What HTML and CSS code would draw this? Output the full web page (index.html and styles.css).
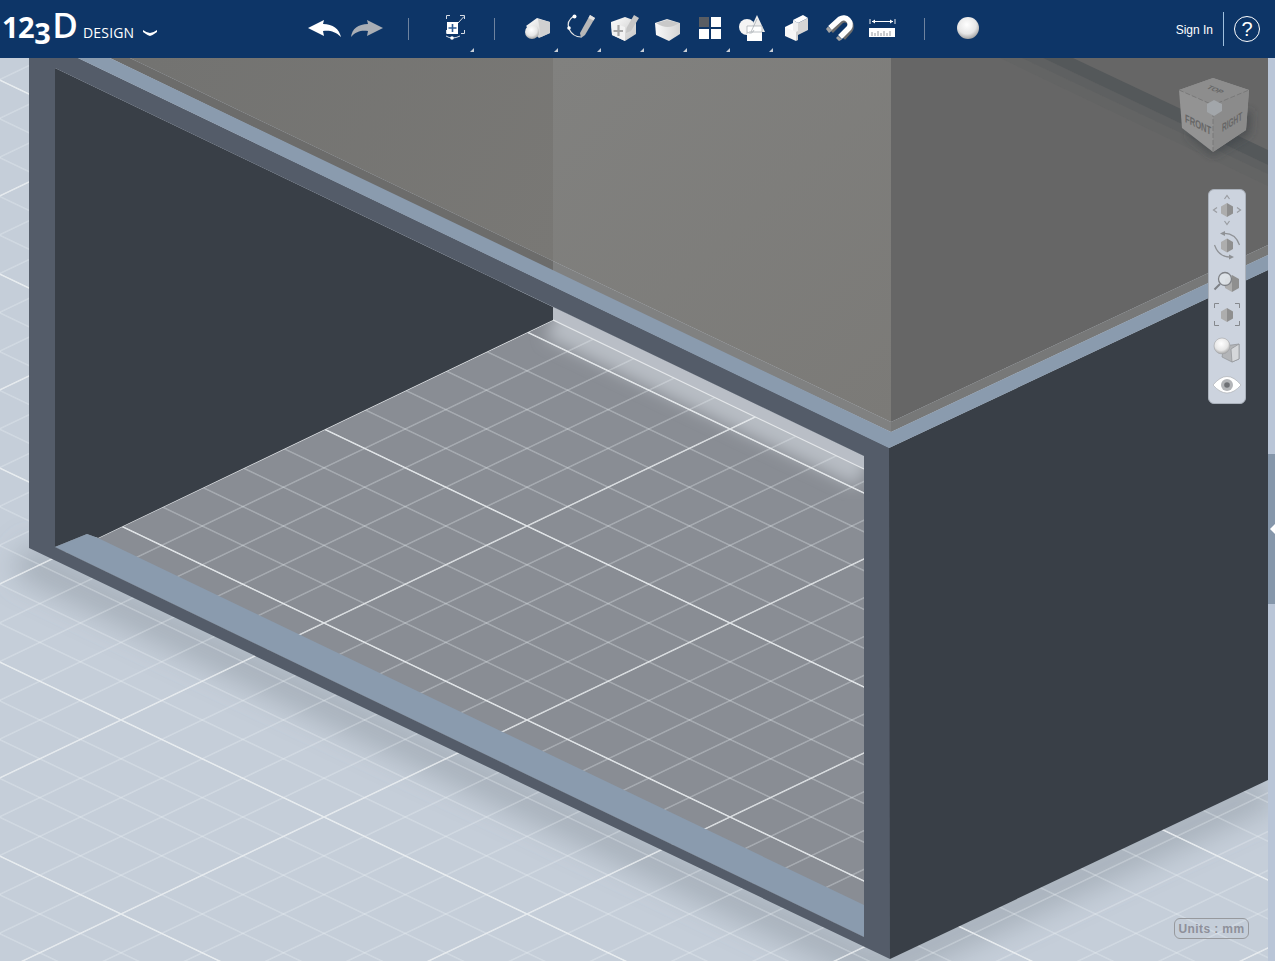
FILE: index.html
```html
<!DOCTYPE html>
<html lang="en">
<head>
  <meta charset="UTF-8" />
  <title>123D Design</title>
  <link rel="stylesheet" href="styles.css">
</head>
<body>
  <svg class="defs" width="0" height="0">
    <defs>
      <linearGradient id="metal" x1="0" y1="0" x2="1" y2="1">
        <stop offset="0" stop-color="#ffffff"/>
        <stop offset="1" stop-color="#c4c4c4"/>
      </linearGradient>
      <linearGradient id="side" x1="0" y1="0" x2="1" y2="0">
        <stop offset="0" stop-color="#fafafa"/>
        <stop offset="1" stop-color="#d4d4d4"/>
      </linearGradient>
      <radialGradient id="ball" cx="0.45" cy="0.35" r="0.7">
        <stop offset="0" stop-color="#ffffff"/>
        <stop offset="0.6" stop-color="#e6e6e6"/>
        <stop offset="1" stop-color="#969696"/>
      </radialGradient>
    </defs>
  </svg>

  <header class="topbar">
    <div class="logo">
      <span class="logo-num">12<span class="logo-three">3</span></span><span class="logo-d">D</span>
      <span class="logo-word">DESIGN</span>
      <svg class="logo-chevron" width="16" height="8" viewBox="0 0 16 8"><path d="M1 1 Q5 4 8 4 Q11 4 15 1 L15 3 Q11 6 8 7 Q5 6 1 3 Z" fill="#fff"/></svg>
    </div>

    <div class="tool">
      <svg class="icon" viewBox="303 8 40 40"><path d="M307 28 L323 20 L322 24 C332 24 338 29 340 37 C334 31 328 30 322 31 L323 36 Z" fill="#fff"/></svg>
    </div>
    <div class="tool">
      <svg class="icon" viewBox="346 8 40 40"><path d="M382 28 L366 20 L367 24 C357 24 351 29 350 37 C355 31 361 30 367 31 L366 36 Z" fill="#a9aeb5"/></svg>
    </div>
    <div class="sep sep-a"></div>

    <div class="tool has-menu">
      <svg class="icon" viewBox="433 8 40 40">
        <path d="M449 15.500 H445.500 V19 M459 15.500 H463.500 V19 M445.500 30 V33.500 H446 M463.500 30 V33.500 H460" fill="none" stroke="#d5dbe4" stroke-width="1"/>
        <path d="M457 23 L463 16.500" stroke="#d5dbe4" stroke-width="1"/>
        <rect x="446" y="22" width="11" height="12" fill="#fff"/>
        <path d="M451.500 24 V32 M447.500 28 H455.500" stroke="#2c5a92" stroke-width="1.600"/>
        <path d="M445 36 Q451 40 459 36" fill="none" stroke="#d5dbe4" stroke-width="1"/>
        <circle cx="451" cy="38" r="1.800" fill="#fff"/>
      </svg>
    </div>
    <div class="sep sep-b"></div>

    <div class="tool has-menu">
      <svg class="icon" viewBox="518 8 40 40">
        <path d="M526 26 L537 18 L550 22 V33 L539 38 Z" fill="url(#metal)"/>
        <path d="M538 19 L550 22 V33 L541 37 Z" fill="#d0d0d0"/>
        <circle cx="532" cy="32" r="7" fill="url(#ball)"/>
      </svg>
    </div>
    <div class="tool has-menu">
      <svg class="icon" viewBox="561 8 40 40">
        <path d="M574 16 Q566 21 569 29 Q573 37 581 37" fill="none" stroke="#e6e6e6" stroke-width="1.200"/>
        <circle cx="574.500" cy="16.500" r="2" fill="#fff"/>
        <circle cx="569" cy="28" r="1.800" fill="#fff"/>
        <path d="M590 15 L595 18 L585 35 L581 38 L580 33 Z" fill="#b8b8b8"/>
        <path d="M590 15 L595 18 L593.500 20.500 L588.500 18 Z" fill="#e2e2e2"/>
      </svg>
    </div>
    <div class="tool has-menu">
      <svg class="icon" viewBox="604 8 40 40">
        <path d="M611 22 L625 17 L636 21 V34 L625 41 L612 35 Z" fill="url(#metal)"/>
        <path d="M611 22 L625 27 V41 L612 35 Z" fill="#f2f2f2"/>
        <path d="M618.500 25 V36 M613.500 31 H623" stroke="#a6a6a6" stroke-width="2.200"/>
        <path d="M634 15 L639 18 L631 31 L626 33 L626.500 28 Z" fill="#c6c6c6"/>
      </svg>
    </div>
    <div class="tool has-menu">
      <svg class="icon" viewBox="647 8 40 40">
        <path d="M655 23 L667 19 L680 23 V34 L669 41 L656 35 Z" fill="url(#side)"/>
        <path d="M656 23 L667 20 L679 23 Q668 31 656 23 Z" fill="#c9c9c9"/>
      </svg>
    </div>
    <div class="tool has-menu">
      <svg class="icon" viewBox="690 8 40 40">
        <rect x="699" y="17" width="10" height="10" fill="#595d63"/>
        <rect x="711" y="17" width="10" height="10" fill="#fff"/>
        <rect x="699" y="29" width="10" height="10" fill="#fff"/>
        <rect x="711" y="29" width="10" height="10" fill="#fff"/>
      </svg>
    </div>
    <div class="tool has-menu">
      <svg class="icon" viewBox="733 8 40 40">
        <circle cx="747" cy="27" r="8" fill="#f4f4f4"/>
        <path d="M757 15 L765 32 H749 Z" fill="#ededed"/>
        <rect x="747" y="26" width="15" height="15" fill="#fff"/>
        <path d="M747 26 H762 V32 M747 26 V34 M751 32 L757 19 M747 32 Q752 35 754 30 M749 32 H762" fill="none" stroke="#a2a7ae" stroke-width="0.700"/>
      </svg>
    </div>
    <div class="tool">
      <svg class="icon" viewBox="776 8 40 40">
        <path d="M793 20 L803 15 L808 18 L798 23 Z" fill="#fff"/>
        <path d="M793 20 L798 23 V35 L793 32 Z" fill="#f0f0f0"/>
        <path d="M798 23 L808 18 V30 L798 35 Z" fill="#d6d6d6"/>
        <path d="M785 27 L793 23 V32 L797 34 L785 30 Z" fill="#fff"/>
        <path d="M785 27 L796 32 V41 L785 36 Z" fill="#f7f7f7"/>
        <path d="M796 32 L798 31 V40 L796 41 Z" fill="#cfcfcf"/>
      </svg>
    </div>
    <div class="tool">
      <svg class="icon" viewBox="819 8 40 40">
        <path d="M830 30 L840 20 A6.500 6.500 0 0 1 849 29 L842 37" fill="none" stroke="#6d6d6d" stroke-width="5.500" transform="translate(1 1)"/>
        <path d="M830 28 L840 19 A6.500 6.500 0 0 1 849 28 L840 37" fill="none" stroke="#fff" stroke-width="5.500"/>
        <path d="M828 26.500 L832 30.500 L829 33 L826 29 Z M838 36 L842 39.500 L839 41 L836 38 Z" fill="#a3a3a3"/>
      </svg>
    </div>
    <div class="tool">
      <svg class="icon" viewBox="862 8 40 40">
        <path d="M870 19 V24 M895 19 V24" stroke="#e4e8ee" stroke-width="1"/>
        <path d="M872 21.500 H893" stroke="#fff" stroke-width="1"/>
        <path d="M872 21.500 L875 19.500 V23.500 Z M893 21.500 L890 19.500 V23.500 Z" fill="#fff"/>
        <rect x="869" y="28" width="26" height="9" fill="#fff"/>
        <path d="M872 36 V32 M875 36 V33 M878 36 V31 M881 36 V33 M884 36 V31 M887 36 V33 M890 36 V31" stroke="#7a7f86" stroke-width="0.800"/>
      </svg>
    </div>
    <div class="sep sep-c"></div>

    <div class="tool">
      <svg class="icon" viewBox="949 8 40 40"><circle cx="968" cy="28" r="11" fill="url(#ball)"/></svg>
    </div>

    <a class="signin">Sign In</a>
    <div class="sep-light"></div>
    <div class="help">?</div>
  </header>

  <main class="workspace">
    <div class="viewport">
      <svg class="scene" width="1268" height="903" viewBox="0 58 1268 903">
        <defs>
          <pattern id="grid" patternUnits="userSpaceOnUse" width="100" height="100" patternTransform="matrix(2.03 0.97 2.03 -0.97 527 526)">
            <path d="M20 0V100M40 0V100M60 0V100M80 0V100M0 20H100M0 40H100M0 60H100M0 80H100" stroke="#eef2f6" stroke-opacity="0.6" stroke-width="0.42"/>
            <path d="M0 0V100M100 0V100M0 0H100M0 100H100" stroke="#eef1f4" stroke-opacity="0.85" stroke-width="0.8"/>
          </pattern>
          <clipPath id="floorClip"><polygon points="55,547 553,307 864,456 864,937"/></clipPath>
          <filter id="soft" x="-20%" y="-20%" width="140%" height="140%"><feGaussianBlur stdDeviation="14"/></filter>
          <filter id="soft2" x="-20%" y="-20%" width="140%" height="140%"><feGaussianBlur stdDeviation="8"/></filter>
          <linearGradient id="topLeft" gradientUnits="userSpaceOnUse" x1="150" y1="58" x2="553" y2="262">
            <stop offset="0" stop-color="#737371"/>
            <stop offset="1" stop-color="#797875"/>
          </linearGradient>
          <linearGradient id="topMid" gradientUnits="userSpaceOnUse" x1="553" y1="58" x2="891" y2="422">
            <stop offset="0" stop-color="#81817f"/>
            <stop offset="1" stop-color="#7b7a77"/>
          </linearGradient>
        </defs>

        <!-- ground -->
        <rect x="0" y="58" width="1268" height="903" fill="#c5ced9"/>
        <path d="M20 558 L880 968 L1268 788" fill="none" stroke="#7f8791" stroke-width="36" stroke-opacity="0.42" filter="url(#soft)"/>
        <rect x="0" y="58" width="1268" height="903" fill="url(#grid)"/>

        <!-- inside of the box -->
        <polygon points="55,547 553,307 864,456 864,937" fill="#898d94"/>
        <g clip-path="url(#floorClip)">
          <path d="M553 322 L864 471" fill="none" stroke="#b8bdc4" stroke-width="34" filter="url(#soft2)"/>
        </g>
        <polygon points="553,307 864,456 864,469 553,320" fill="#b9bec6"/>
        <polygon points="55,547 553,320 864,469 864,937" fill="url(#grid)"/>
        <path d="M98 538 L553 320 L864 469" fill="none" stroke="#e4e7ea" stroke-width="1.200"/>
        <polygon points="55,68 553,307 553,320 98,538 87,534 55,547" fill="#393f47"/>
        <polygon points="55,547 87,534 98,538 864,905 864,937" fill="#8a9bae"/>

        <!-- front frame -->
        <path fill-rule="evenodd" fill="#545c69" d="M29 58 V548 L890 959 V448 L78 58 Z M55 68 V547 L864 937 V456 Z"/>
        <polygon points="889,448 1268,270 1268,780 890,959" fill="#393f47"/>

        <!-- lid -->
        <polygon points="130,58 553,58 553,261" fill="url(#topLeft)"/>
        <polygon points="553,58 891,58 891,422 553,261" fill="url(#topMid)"/>
        <polygon points="891,58 1268,58 1268,245 891,422" fill="#666666"/>
        <polygon points="1000,58 1022,58 1268,174 1268,186" fill="#636464"/>
        <polygon points="1022,58 1043,58 1268,165 1268,174" fill="#5e6061"/>
        <polygon points="1043,58 1073,58 1268,150 1268,165" fill="#54585a"/>
        <polygon points="110,58 130,58 553,261 553,272" fill="#6c6c6b"/>
        <polygon points="553,261 891,422 891,432 553,272" fill="#808181"/>
        <polygon points="891,422 1268,245 1268,255 891,432" fill="#777878"/>
        <polygon points="78,58 110,58 891,432 1268,255 1268,270 889,448" fill="#8a9bae"/>
      </svg>

      <svg class="viewcube" width="90" height="94" viewBox="1170 74 90 94">
        <defs>
          <filter id="cubeShadow" x="-30%" y="-30%" width="160%" height="160%"><feGaussianBlur stdDeviation="4"/></filter>
        </defs>
        <polygon points="1186,134 1213,156 1250,134 1252,110" fill="#3c3f41" fill-opacity="0.55" filter="url(#cubeShadow)"/>
        <polygon points="1179,90 1213,78 1249,90 1246,130 1213,152 1182,128" fill="#939393"/>
        <polygon points="1179,90 1213,78 1249,90 1213,105" fill="#8d8d8d"/>
        <polygon points="1213,105 1249,90 1246,130 1213,152" fill="#8b8b8b"/>
        <path d="M1179 90 L1213 105 L1249 90 M1213 105 V152" fill="none" stroke="#707070" stroke-width="0.700" stroke-dasharray="5 2"/>
        <polygon points="1207,104 1214,100 1222,104 1222,111 1214,116 1207,112" fill="#a2a6aa"/>
        <text class="cube-label" transform="matrix(0.72 0.3 -0.6 0.42 1206 88)">TOP</text>
        <text class="cube-label" transform="matrix(0.76 0.38 0 1.150 1185 122)">FRONT</text>
        <text class="cube-label" transform="matrix(0.65 -0.4 0 1.150 1222 132)">RIGHT</text>
      </svg>

      <nav class="navbar">
        <svg class="nav-icon" viewBox="1211 193 32 34">
          <polygon points="1227,203 1233,206.500 1233,213.500 1227,217" fill="#8f8f8f"/>
          <polygon points="1227,203 1221,206.500 1221,213.500 1227,217" fill="#adadad"/>
          <path d="M1224.500 199 L1227 195.500 L1229.500 199 M1224.500 221 L1227 224.500 L1229.500 221 M1217 207.500 L1213.500 210 L1217 212.500 M1237 207.500 L1240.500 210 L1237 212.500" fill="none" stroke="#999ca1" stroke-width="1.200"/>
        </svg>
        <svg class="nav-icon" viewBox="1211 228 32 34">
          <polygon points="1227,238.500 1233,242 1233,249 1227,252.500" fill="#8f8f8f"/>
          <polygon points="1227,238.500 1221,242 1221,249 1227,252.500" fill="#adadad"/>
          <path d="M1222 233.500 Q1235 232 1239.500 245 M1232 257 Q1219 258 1214.500 245" fill="none" stroke="#8f9296" stroke-width="1.200"/>
          <path d="M1225 231 V236 L1220 233.500 Z M1229 254.500 V259.500 L1234 257 Z" fill="#8f9296"/>
        </svg>
        <svg class="nav-icon" viewBox="1211 263 32 34">
          <polygon points="1232,275 1239,279 1239,288 1232,292" fill="#8f8f8f"/>
          <polygon points="1232,275 1225,279 1225,288 1232,292" fill="#adadad"/>
          <circle cx="1225" cy="279" r="6.500" fill="#dfe3e8" fill-opacity="0.9" stroke="#7e8186" stroke-width="1.300"/>
          <path d="M1220 284 L1214.500 289.500" stroke="#7e8186" stroke-width="2"/>
        </svg>
        <svg class="nav-icon" viewBox="1211 298 32 34">
          <polygon points="1227,308 1233,311.500 1233,318.500 1227,322" fill="#8f8f8f"/>
          <polygon points="1227,308 1221,311.500 1221,318.500 1227,322" fill="#adadad"/>
          <path d="M1219 303.500 H1214.500 V308 M1235 303.500 H1239.500 V308 M1214.500 321 V325.500 H1219 M1239.500 321 V325.500 H1235" fill="none" stroke="#85888d" stroke-width="1"/>
        </svg>
        <svg class="nav-icon" viewBox="1211 333 32 34">
          <path d="M1224 346 L1239 344 V359 L1232 362 L1222 357 Z" fill="#b3b5b8" stroke="#8f9296" stroke-width="0.700"/>
          <path d="M1231 349 L1239 344 V359 L1232 362 Z" fill="#d5d7da" stroke="#8f9296" stroke-width="0.700"/>
          <circle cx="1222" cy="346" r="8" fill="url(#ball)" stroke="#a3a5a8" stroke-width="0.600"/>
        </svg>
        <svg class="nav-icon" viewBox="1211 369 32 34">
          <path d="M1213 386 Q1227 369 1241 386 Q1227 402 1213 386 Z" fill="#fff" stroke="#a6a9ad" stroke-width="0.600"/>
          <circle cx="1227" cy="386" r="6" fill="#b3b5b8"/>
          <circle cx="1227" cy="386" r="2.800" fill="#6f7175"/>
        </svg>
      </nav>

      <div class="units">Units : mm</div>
    </div>

    <aside class="side-strip">
      <div class="side-handle"><span class="side-arrow"></span></div>
    </aside>
  </main>
</body>
</html>
```

FILE: styles.css
```css
* {
  box-sizing: border-box;
  margin: 0;
  padding: 0;
}

body {
  font-family: "Liberation Sans", Arial, sans-serif;
  width: 1275px;
  height: 961px;
  overflow: hidden;
  background: #c5ced9;
}

.defs {
  display: block;
  height: 0;
}

/* top toolbar */
.topbar {
  display: flex;
  align-items: center;
  height: 58px;
  background-color: #0d3567;
  color: white;
}

.logo {
  display: flex;
  align-items: baseline;
  width: 302px;
  padding-left: 2px;
  padding-bottom: 6px;
  font-family: "Open Sans", sans-serif;
  color: #fff;
}

.logo-num {
  font-size: 29px;
  font-weight: 700;
  letter-spacing: -0.500px;
}

.logo-three {
  position: relative;
  top: 6px;
}

.logo-d {
  font-size: 35px;
  font-weight: 600;
  letter-spacing: 0;
  line-height: 1;
  margin-left: 2px;
}

.logo-word {
  font-size: 14px;
  margin-left: 5px;
  letter-spacing: 0.200px;
}

.logo-chevron {
  align-self: flex-start;
  margin-top: 22px;
  margin-left: 8px;
}

.tool {
  position: relative;
  display: flex;
  align-items: center;
  justify-content: center;
  flex: none;
  width: 43px;
  height: 58px;
  padding-bottom: 2px;
}

.icon {
  display: block;
  width: 40px;
  height: 40px;
}

.has-menu::after {
  content: "";
  position: absolute;
  right: 1px;
  bottom: 6px;
  border-left: 4px solid transparent;
  border-bottom: 4px solid #c8ced6;
}

.sep {
  flex: none;
  width: 1px;
  height: 22px;
  background-color: #6e839f;
}

.sep-a { margin: 0 23px 0 20px; }
.sep-b { margin: 0 21px 0 19px; }
.sep-c { margin: 0 22px 0 21px; }

.signin {
  margin-left: auto;
  padding-top: 2px;
  font-size: 12px;
  color: #fff;
}

.sep-light {
  width: 1px;
  height: 34px;
  margin: 0 10px;
  background-color: #9fc0de;
}

.help {
  width: 26px;
  height: 26px;
  margin-right: 15px;
  border: 1.500px solid #fff;
  border-radius: 50%;
  font-size: 20px;
  line-height: 24px;
  text-align: center;
  color: #fff;
}

/* 3d view */
.workspace {
  display: flex;
  height: 903px;
}

.viewport {
  position: relative;
  flex: 1;
  overflow: hidden;
}

.scene {
  display: block;
}

.viewcube {
  position: absolute;
  top: 16px;
  left: 1170px;
}

.cube-label {
  font-family: "Liberation Sans", sans-serif;
  font-size: 10px;
  font-weight: bold;
  fill: #666666;
}

.navbar {
  position: absolute;
  top: 131px;
  left: 1208px;
  display: flex;
  flex-direction: column;
  align-items: center;
  width: 38px;
  height: 215px;
  padding-top: 3px;
  gap: 1px;
  background-color: #ccd3de;
  border: 1px solid #aab1bb;
  border-radius: 6px;
}

.nav-icon {
  display: block;
  flex: none;
  width: 32px;
  height: 34px;
}

.units {
  position: absolute;
  top: 860px;
  left: 1174px;
  width: 75px;
  height: 21px;
  border: 1px solid #97999d;
  border-radius: 6px;
  font-size: 12px;
  font-weight: bold;
  line-height: 20px;
  letter-spacing: 0.400px;
  text-align: center;
  color: #8e909a;
}

/* collapse strip on the right */
.side-strip {
  flex: none;
  width: 7px;
  padding-top: 396px;
  background-color: #b9c5d7;
}

.side-handle {
  display: flex;
  align-items: center;
  justify-content: flex-end;
  height: 150px;
  background-color: #8596aa;
}

.side-arrow {
  border-top: 5px solid transparent;
  border-bottom: 5px solid transparent;
  border-right: 5px solid #fff;
}
```
